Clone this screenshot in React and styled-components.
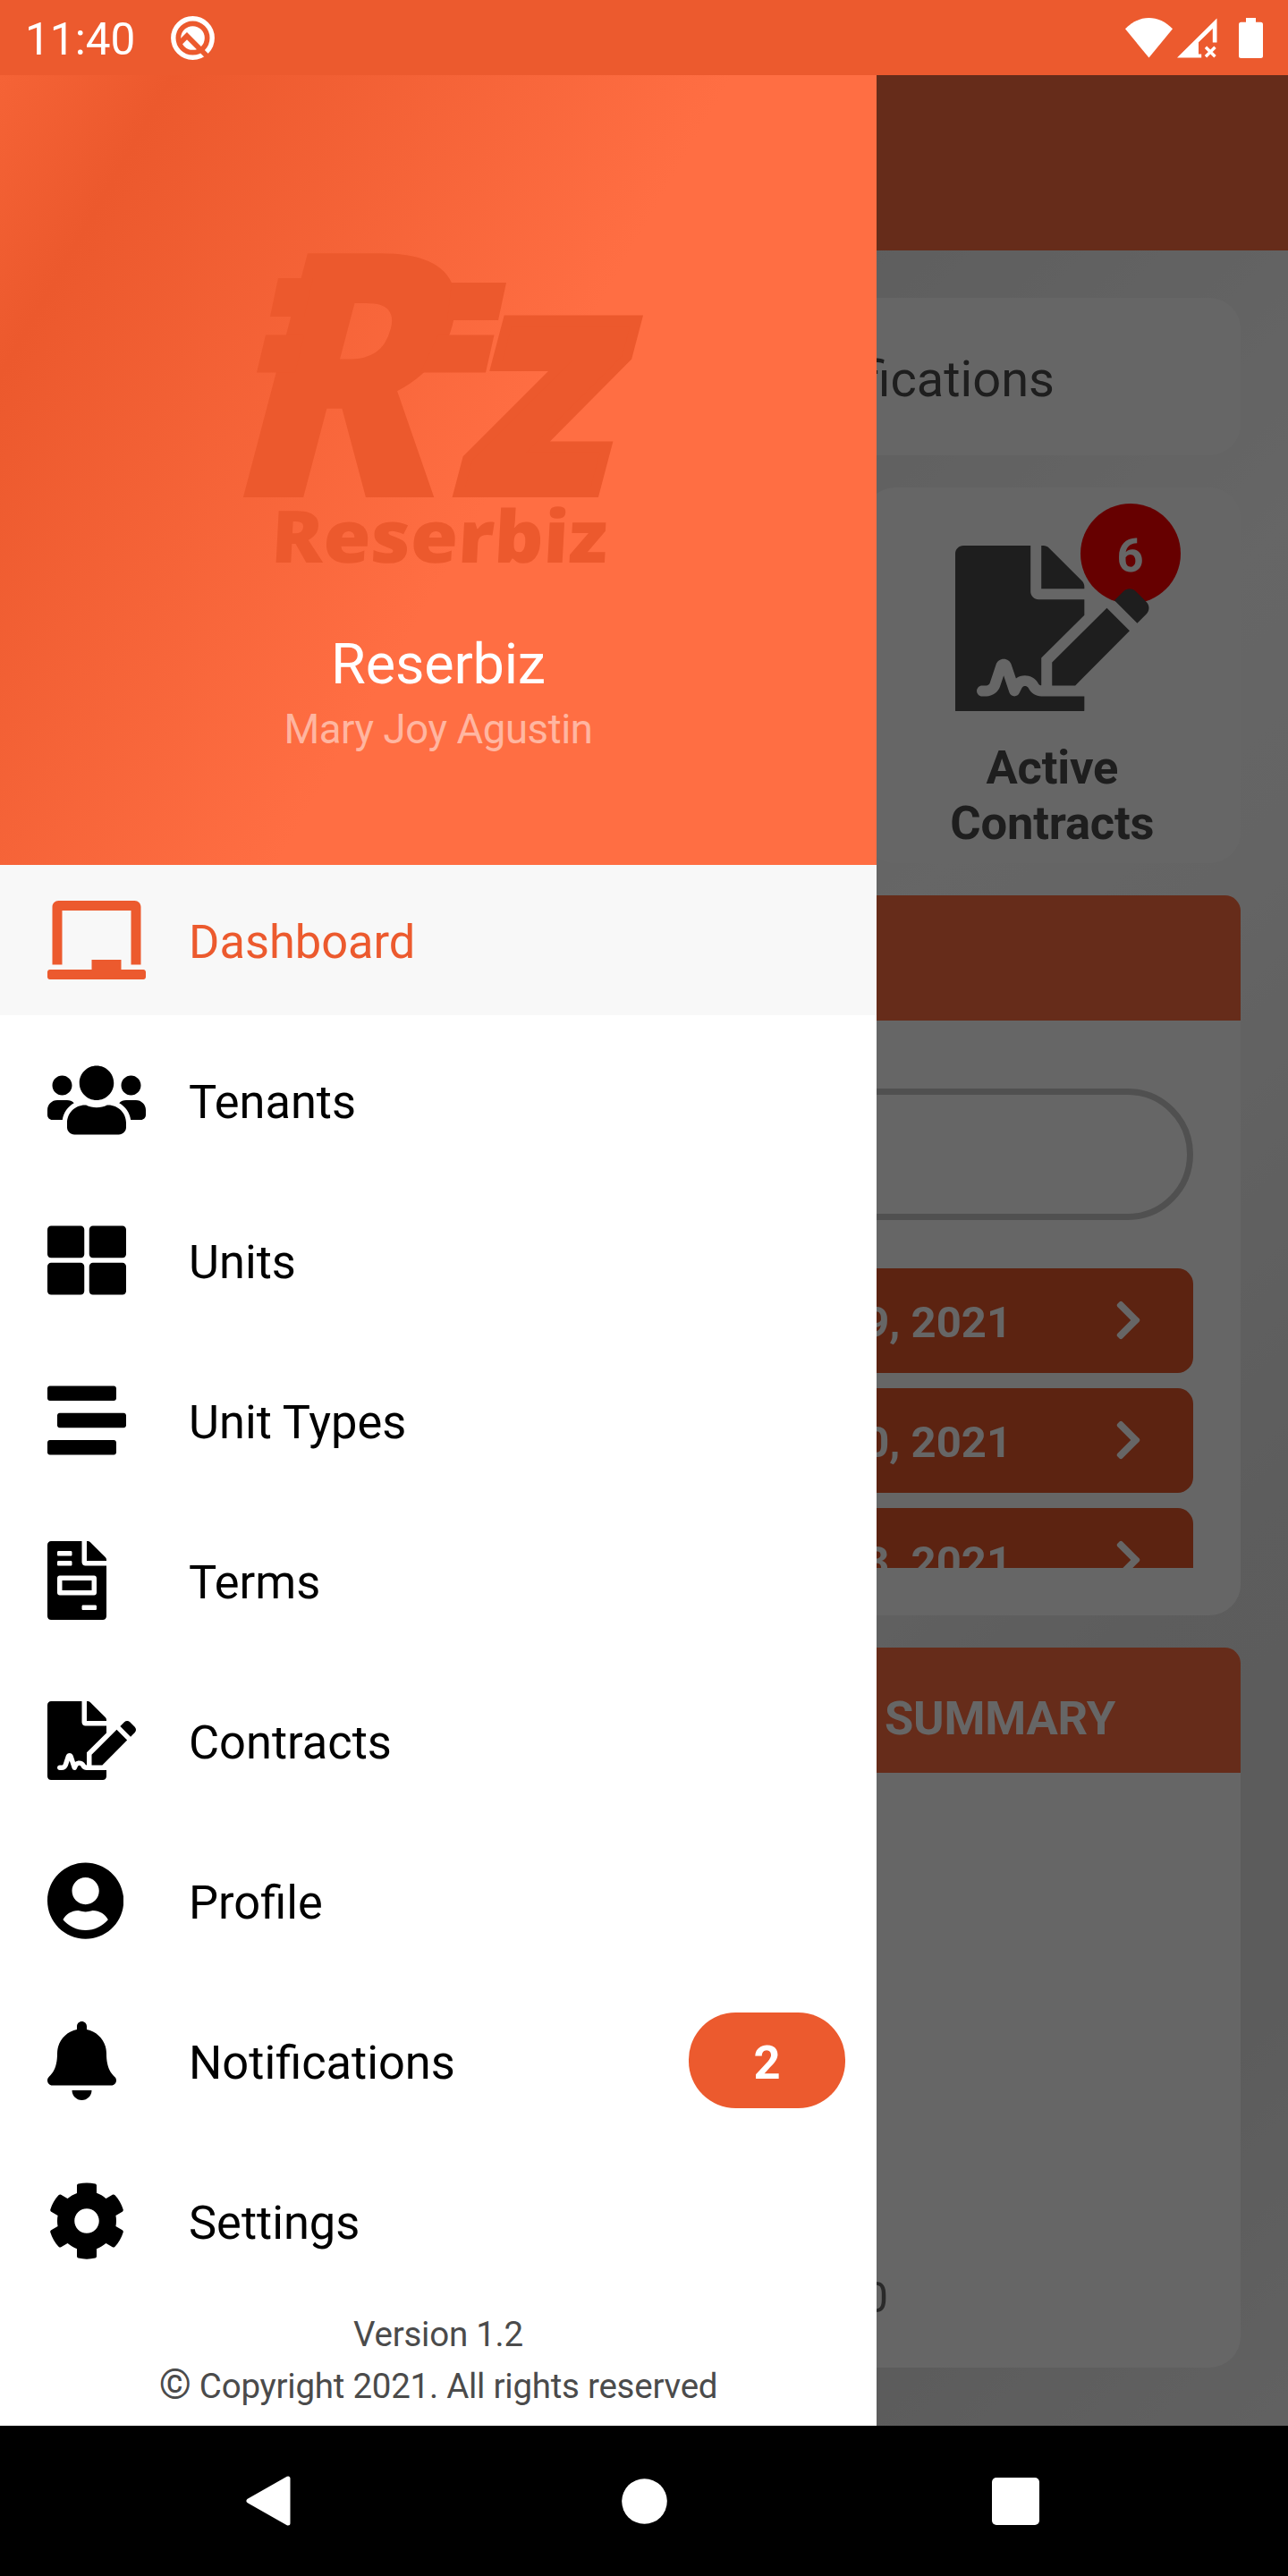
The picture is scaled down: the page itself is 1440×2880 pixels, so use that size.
import React from "react";
import styled, { createGlobalStyle } from "styled-components";
import {
  FaBell,
  FaChalkboard,
  FaChevronRight,
  FaCog,
  FaFileInvoice,
  FaFileSignature,
  FaStream,
  FaThLarge,
  FaUserCircle,
  FaUsers,
} from "react-icons/fa";

const color = {
  primary: "#ec5a2e",
  primaryDeep: "#e6572b",
  primaryLight: "#ff6e43",
  text: "#4b4b4b",
};

const GlobalStyle = createGlobalStyle`
  *, *::before, *::after { box-sizing: border-box; }
  body { margin: 0; font-family: Roboto, "Noto Sans", sans-serif; }
  svg { display: block; }
`;

const Screen = styled.div`
  display: flex;
  flex-direction: column;
  width: 1440px;
  height: 2880px;
  overflow: hidden;
`;

/* ---- System bars ---- */

const StatusBar = styled.header`
  display: flex;
  align-items: center;
  height: 84px;
  padding: 0 28px;
  background: ${color.primary};
  color: #fff;
`;

const Clock = styled.span`
  width: 163px;
  padding-top: 4px;
  font-size: 49.5px;
  line-height: 58px;
`;

const StatusIcons = styled.div`
  display: flex;
  align-items: center;
  margin-left: auto;
`;

const Spacer = styled.span`
  width: ${(p) => p.$w}px;
`;

const NavBar = styled.nav`
  display: flex;
  justify-content: center;
  height: 168px;
  background: #000;
`;

const NavButton = styled.div`
  display: flex;
  align-items: center;
  justify-content: center;
  width: 415px;
`;

/* ---- Dashboard page ---- */

const Body = styled.div`
  position: relative;
  height: 2628px;
`;

const Page = styled.main`
  display: flex;
  flex-direction: column;
  height: 100%;
  isolation: isolate;
`;

const AppBar = styled.div`
  height: 196px;
  flex: none;
  background: ${color.primaryLight};
`;

const Content = styled.div`
  display: flex;
  flex-direction: column;
  flex: 1;
  gap: 36px;
  padding: 53px 53px 0;
  background: linear-gradient(
    135deg,
    #e0e0e0 0%,
    #ededed 26%,
    #f7f7f7 37%,
    #fefefe 45%,
    #fbfbfb 53%,
    #e8e8e8 73%,
    #e5e5e5 86%,
    #f3f3f3 100%
  );
`;

const NoticeCard = styled.section`
  display: flex;
  align-items: center;
  justify-content: flex-end;
  height: 176px;
  padding: 5px 208px 0 0;
  border-radius: 35px;
  background: #fff;
  color: ${color.text};
  font-size: 56px;
`;

const StatGrid = styled.div`
  display: grid;
  grid-template-columns: repeat(3, 1fr);
  gap: 35px;
  height: 420px;
`;

const StatCard = styled.section`
  position: relative;
  grid-column: 3;
  display: flex;
  flex-direction: column;
  align-items: center;
  padding-top: 65px;
  border-radius: 35px;
  background: #fff;
  color: ${color.text};
`;

const StatIcon = styled.div`
  position: relative;
  z-index: 1;
  height: 185px;
  overflow: hidden;

  svg {
    width: 216.5px;
    height: 192.5px;
  }
`;

const StatLabel = styled.div`
  width: 260px;
  margin-top: 32px;
  font-size: 52.5px;
  font-weight: 700;
  letter-spacing: -0.2px;
  line-height: 62px;
  text-align: center;
`;

const StatBadge = styled.span`
  position: absolute;
  top: 18px;
  left: 242px;
  display: flex;
  align-items: center;
  justify-content: center;
  width: 112px;
  height: 112px;
  padding-top: 4px;
  border-radius: 50%;
  background: #f00;
  color: #fff;
  font-size: 52.5px;
  font-weight: 700;
`;

const Panel = styled.section`
  display: flex;
  flex-direction: column;
  height: 805px;
  border-radius: 17.5px 17.5px 35px 35px;
  background: #fff;
`;

const PanelHeader = styled.div`
  display: flex;
  align-items: center;
  justify-content: flex-end;
  height: 140px;
  padding: 18px 140px 0 0;
  border-radius: 17.5px 17.5px 0 0;
  background: ${color.primaryLight};
  color: #fff;
  font-size: 52.5px;
  font-weight: 700;
  letter-spacing: -0.2px;
`;

const PanelBody = styled.div`
  display: flex;
  flex-direction: column;
  gap: 54px;
  padding: 76px 53px 53px;
`;

const SearchBox = styled.div`
  height: 147px;
  border: 7px solid #c8c8c8;
  border-radius: 74px;
`;

const DateList = styled.div`
  display: flex;
  flex-direction: column;
  gap: 17.5px;
  height: 335px;
  overflow: hidden;
`;

const DateRow = styled.div`
  display: flex;
  flex: none;
  align-items: center;
  justify-content: flex-end;
  gap: 115px;
  height: 116.5px;
  padding-right: 57px;
  border-radius: 17.5px;
  background: ${color.primaryDeep};
  color: #fff;
  font-size: 49px;
  font-weight: 700;

  span {
    padding-top: 4px;
  }

  svg {
    width: 31px;
    height: 50px;
  }
`;

const ChartLabel = styled.div`
  margin-top: auto;
  padding: 0 394px 49px 0;
  color: #696969;
  font-size: 49px;
  line-height: 58px;
  text-align: right;
`;

/* ---- Drawer ---- */

const Scrim = styled.div`
  position: absolute;
  inset: 0;
  background: rgba(0, 0, 0, 0.6);
`;

const Drawer = styled.aside`
  position: absolute;
  inset: 0 auto 0 0;
  z-index: 2;
  display: flex;
  flex-direction: column;
  width: 980px;
  background: #fff;
`;

const DrawerHeader = styled.div`
  display: flex;
  flex-direction: column;
  align-items: center;
  flex: none;
  height: 883px;
  padding-top: 186px;
  background: linear-gradient(
    120deg,
    #f56336 0%,
    #ec592d 13%,
    ${color.primaryLight} 55%
  );
`;

const AppName = styled.div`
  margin-top: 66px;
  color: #fff;
  font-size: 63px;
  letter-spacing: -0.2px;
  line-height: 74px;
`;

const UserName = styled.div`
  margin-top: 9px;
  color: rgba(255, 255, 255, 0.5);
  font-size: 45.5px;
  letter-spacing: -0.4px;
  line-height: 53px;
`;

const Menu = styled.div`
  display: flex;
  flex-direction: column;
  gap: 11px;
`;

const MenuItem = styled.div`
  display: flex;
  align-items: center;
  height: 168px;
  padding: 0 35px 0 53px;
  background: ${(p) => (p.$active ? "#f8f8f8" : "#fff")};
  color: ${(p) => (p.$active ? color.primary : "#000")};
`;

const MenuIcon = styled.span`
  width: 158px;

  svg {
    width: ${(p) => (p.$units / 512) * 88}px;
    height: 88px;
  }
`;

const MenuLabel = styled.span`
  flex: 1;
  padding-top: 4px;
  font-size: 52.4px;
`;

const MenuBadge = styled.span`
  display: flex;
  align-items: center;
  justify-content: center;
  width: 175px;
  height: 107px;
  margin-bottom: 1px;
  padding-top: 4px;
  border-radius: 52.5px;
  background: ${color.primary};
  color: #fff;
  font-size: 52.5px;
  font-weight: 700;
`;

const DrawerFooter = styled.footer`
  margin-top: 14px;
  color: ${color.text};
  font-size: 38.5px;
  letter-spacing: -0.25px;
  line-height: 58px;
  text-align: center;
`;

const CopyrightSign = styled.span`
  font-size: 46px;
  line-height: 0;
  vertical-align: -1px;
`;

const LogoSvg = styled.svg`
  width: 480px;
  height: 370px;
  overflow: visible;
  fill: #ec592d;
  font-family: "Open Sans", "Noto Sans", sans-serif;
  font-weight: 800;
`;

function Logo() {
  return (
    <LogoSvg viewBox="250 270 480 370">
      <text transform="translate(245 556) skewX(-14.8)" fontSize="382" textLength="236" lengthAdjust="spacingAndGlyphs">
        R
      </text>
      <text
        transform="translate(505 550) skewX(-14.8)"
        fontSize="346"
        textLength="168"
        lengthAdjust="spacingAndGlyphs"
        stroke="#ec592d"
        strokeWidth="12"
      >
        z
      </text>
      <path d="M311 311H350L340 354H302Z M297 374.5H340L330 416.5H287Z M505 316H566L557 358H500Z M490 374.5H552.5L543 416.5H470Z" />
      <text transform="translate(302 629) skewX(-3)" fontSize="81" textLength="376" lengthAdjust="spacingAndGlyphs">
        Reserbiz
      </text>
    </LogoSvg>
  );
}

function DebugIcon() {
  return (
    <svg width="49" height="49" viewBox="0 0 49 49">
      <circle cx="24.5" cy="24.5" r="21.7" fill="none" stroke="#fff" strokeWidth="5.4" />
      <circle cx="24.5" cy="24.5" r="13.3" fill="#fff" />
      <path d="M9.8 30.4L18 22.2L43.5 47.7" fill="none" stroke={color.primary} strokeWidth="5.8" />
    </svg>
  );
}

function WifiIcon() {
  return (
    <svg width="53" height="45" viewBox="0 0 53 45" fill="#fff">
      <path d="M0 12.3C15.5 -4.1 37.5 -4.1 53 12.3L26.5 44.5Z" />
    </svg>
  );
}

function SignalIcon() {
  return (
    <svg width="45" height="45" viewBox="0 0 45 45">
      <path d="M0 44.5L44.5 0.5V27.5H39.8V12L24 27.3V40.5H27.2V44.5Z" fill="#fff" />
      <path d="M32 32.7L42.5 43.2M42.5 32.7L32 43.2" stroke="#fff" strokeWidth="3.4" />
    </svg>
  );
}

function BatteryIcon() {
  return (
    <svg width="27" height="45" viewBox="0 0 27 45" fill="#fff">
      <rect x="8" y="0" width="11" height="8" />
      <rect x="0" y="4.7" width="27" height="40.3" rx="2.5" />
    </svg>
  );
}

const menu = [
  { label: "Dashboard", icon: FaChalkboard, units: 640, active: true },
  { label: "Tenants", icon: FaUsers, units: 640 },
  { label: "Units", icon: FaThLarge, units: 512 },
  { label: "Unit Types", icon: FaStream, units: 512 },
  { label: "Terms", icon: FaFileInvoice, units: 384 },
  { label: "Contracts", icon: FaFileSignature, units: 576 },
  { label: "Profile", icon: FaUserCircle, units: 496 },
  { label: "Notifications", icon: FaBell, units: 448, badge: 2 },
  { label: "Settings", icon: FaCog, units: 512 },
];

const dates = ["9, 2021", "0, 2021", "3, 2021"];

export default function App() {
  return (
    <Screen>
      <GlobalStyle />
      <StatusBar>
        <Clock>11:40</Clock>
        <DebugIcon />
        <StatusIcons>
          <WifiIcon />
          <Spacer $w={4.5} />
          <SignalIcon />
          <Spacer $w={24.5} />
          <BatteryIcon />
        </StatusIcons>
      </StatusBar>

      <Body>
        <Page>
          <AppBar />
          <Content>
            <NoticeCard>Notifications</NoticeCard>
            <StatGrid>
              <StatCard>
                <StatIcon>
                  <FaFileSignature />
                </StatIcon>
                <StatLabel>Active Contracts</StatLabel>
                <StatBadge>6</StatBadge>
              </StatCard>
            </StatGrid>
            <Panel>
              <PanelHeader />
              <PanelBody>
                <SearchBox />
                <DateList>
                  {dates.map((date) => (
                    <DateRow key={date}>
                      <span>{date}</span>
                      <FaChevronRight />
                    </DateRow>
                  ))}
                </DateList>
              </PanelBody>
            </Panel>
            <Panel>
              <PanelHeader>SUMMARY</PanelHeader>
              <ChartLabel>0</ChartLabel>
            </Panel>
          </Content>
        </Page>
        <Scrim />
        <Drawer>
          <DrawerHeader>
            <Logo />
            <AppName>Reserbiz</AppName>
            <UserName>Mary Joy Agustin</UserName>
          </DrawerHeader>
          <Menu>
            {menu.map(({ label, icon: Icon, units, active, badge }) => (
              <MenuItem key={label} $active={active}>
                <MenuIcon $units={units}>
                  <Icon />
                </MenuIcon>
                <MenuLabel>{label}</MenuLabel>
                {badge && <MenuBadge>{badge}</MenuBadge>}
              </MenuItem>
            ))}
          </Menu>
          <DrawerFooter>
            <div>Version 1.2</div>
            <div>
              <CopyrightSign>©</CopyrightSign> Copyright 2021. All rights reserved
            </div>
          </DrawerFooter>
        </Drawer>
      </Body>

      <NavBar>
        <NavButton>
          <svg width="60" height="56" viewBox="0 0 60 56">
            <path d="M3 28L47 3V53Z" fill="#fff" stroke="#fff" strokeWidth="5" strokeLinejoin="round" />
          </svg>
        </NavButton>
        <NavButton>
          <svg width="51" height="51" viewBox="0 0 51 51">
            <circle cx="25.5" cy="25.5" r="25.3" fill="#fff" />
          </svg>
        </NavButton>
        <NavButton>
          <svg width="53" height="53" viewBox="0 0 53 53">
            <rect width="53" height="53" rx="5" fill="#fff" />
          </svg>
        </NavButton>
      </NavBar>
    </Screen>
  );
}
